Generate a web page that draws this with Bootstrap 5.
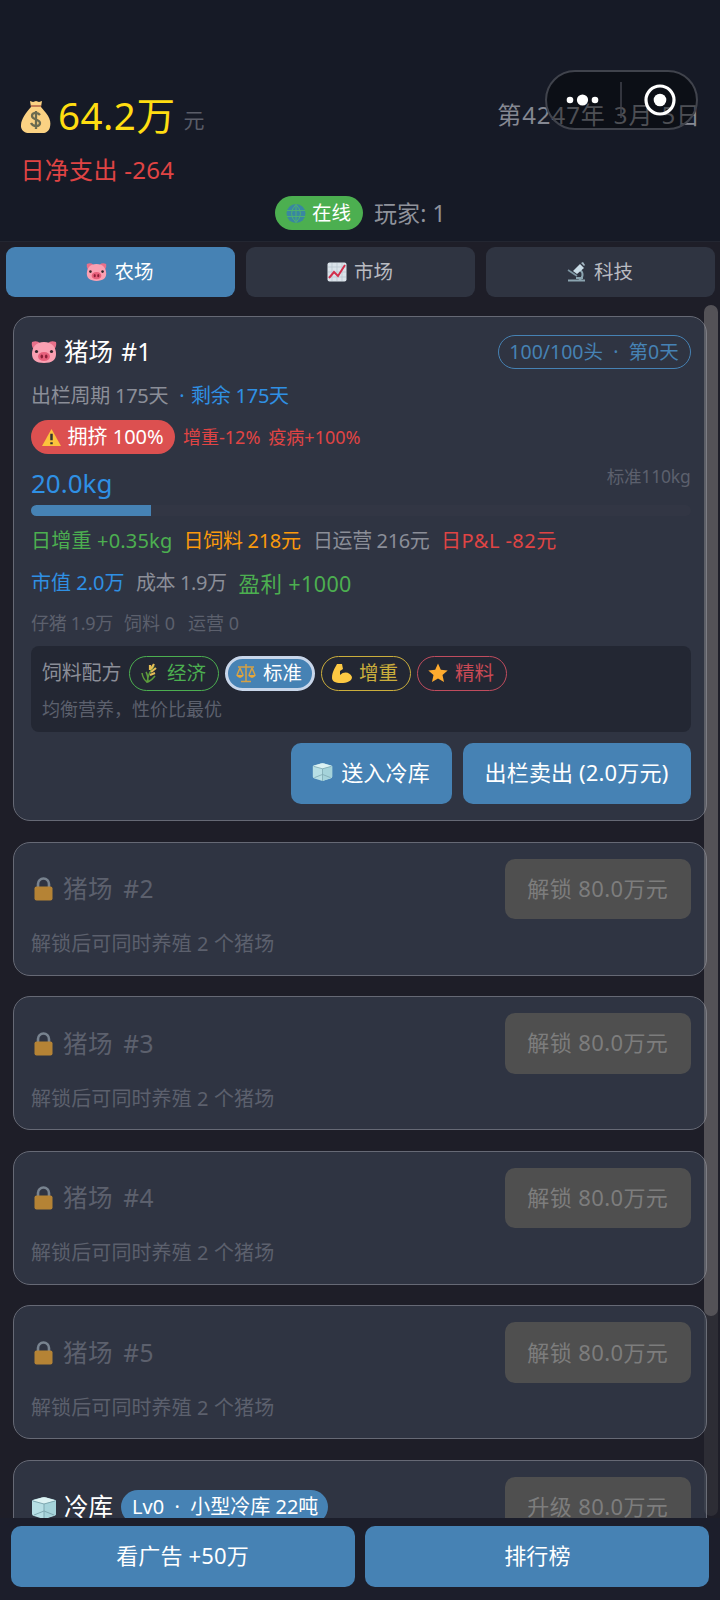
<!DOCTYPE html>
<html lang="zh-CN">
<head>
<meta charset="utf-8">
<meta name="viewport" content="width=device-width, initial-scale=1">
<title>猪场</title>
<link rel="stylesheet" href="https://cdn.jsdelivr.net/npm/bootstrap@5.3.0/dist/css/bootstrap.min.css">
<style>
body{background:#1e1e28;font-family:"Noto Sans","Noto Sans CJK SC",sans-serif;font-size:20px;line-height:1;color:#fff;font-weight:400;height:1600px;overflow:hidden;white-space:nowrap}
svg{flex:none;display:block}
.hud{height:242px;background:#161a26;border-bottom:1px solid #232631;position:relative}
.cash{height:46px;margin:94px 20px 0 21px}
.cash-num{font-size:38.5px;color:#fd1;margin-left:7px;padding-bottom:3px;letter-spacing:.5px}
.unit{font-size:21px;color:#5a5d68;margin:6px 0 0 8px}
.date{font-size:24px;color:#858892;word-spacing:1px;letter-spacing:.9px;margin-right:-1px;padding-bottom:4px}
.net{font-size:24px;color:#e04444;height:34px;margin:13px 0 0 20.5px;letter-spacing:.3px}
.online{height:34px;margin-top:9px;padding-left:275px}
.pill{border-radius:99px;height:34px;display:flex;align-items:center}
.pill-on{background:#4caf50;width:88px;padding-left:11px;gap:6px;font-size:19.5px}
.players{font-size:23px;color:#8f929b;margin-left:11px;letter-spacing:.1px}
.capsule{position:absolute;left:545px;top:70px;width:153px;height:60px;border-radius:30px;background:rgba(0,0,0,.42);border:2px solid #40434c}
.tabs{padding:5px 5.5px 0;gap:11px;height:62px}
.tab-b{height:50px;border-radius:9px;background:#2f3441;color:#b9bbc1;font-size:19.5px;gap:7px;flex:1 1 0}
.tab-b.on{background:#4682b4;color:#fff}
.list{height:1214px;overflow:hidden;position:relative;padding:11.5px 13px 0}
.farm{border:1px solid #666975;border-radius:17px;background:#2f3442;padding:16px 15.5px 15px 17px;margin-bottom:20.6px;height:134px}
.farm-open{height:505px;margin-bottom:21px}
.name{font-size:24.5px;gap:7px;word-spacing:2px;padding-top:1px}
.dim .name{letter-spacing:.6px;word-spacing:3px}
.headcount{border:1px solid #4682b4;color:#4682b4;height:34px;width:193px;justify-content:center;font-size:19.5px}
.grey{color:#8b8e98}.dim{color:#5c606d}.blue{color:#2f90e4}.green{color:#4caf50}.amber{color:#fb9a0c}.red{color:#e04444}
.crowd{background:#dc5050;width:144px;padding-left:10.5px;gap:7px;font-size:20px}
.tiny{font-size:18px}
.bar{height:11px;border-radius:6px;background:#323644}
.bar>div{height:100%;background:#4682b4}
.stat{display:grid;align-items:center}
.s1{grid-template-columns:152.5px 129.5px 128px auto;height:51px}
.s2{grid-template-columns:105px 102.5px auto;height:33.5px}
.s3{grid-template-columns:93px 64px auto;font-size:18px;height:45.5px}
.r-head{height:38px}.r-cycle{height:50px;letter-spacing:-.25px}.r-crowd{height:33px}.r-weight{height:51px}
.feed{background:#232733;border-radius:8px;height:86px;padding:10px 11px 0}
.opt{width:90px;border:1px solid #4caf50;padding-left:10px;gap:7px;height:35px;font-size:19.5px}
.opt-sel{border:3px solid #c8d6ea;background:#4682b4;color:#fff;padding-left:8px}
.opt-y{border-color:#cbae3c;color:#cbae3c}.opt-r{border-color:#c04c5e;color:#c94a56}
.act{background:#4682b4;border-radius:10px;height:60.5px;font-size:22px;color:#fff;display:flex;align-items:center;justify-content:center;gap:8px;padding-bottom:2px;letter-spacing:.15px}
.act-off{background:#4f4f4f;color:#7d7d7d;width:185.5px;letter-spacing:.4px}
.desc{margin-top:15px;letter-spacing:.1px}
.track{position:absolute;right:2.5px;top:1px;width:14px;height:1211px;border-radius:7px;background:rgba(150,150,150,.13)}
.thumb{height:1011px;border-radius:7px;background:rgba(160,155,155,.34)}
.foot{height:82px;background:#1c1e2b;padding:8px 10.5px 0;gap:10.8px;position:relative}
</style>
</head>
<body>
<svg width="0" height="0" class="position-absolute">
<symbol id="pig" viewBox="0 0 26 24"><path d="M1 2q5-2 8 1L3 10Q0 6 1 2zM25 2q-5-2-8 1l6 7q3-4 2-8z" fill="#e8708a"/><path d="M13 2C5 2 1 7 1 14c0 6 4 9 12 9s12-3 12-9C25 7 21 2 13 2z" fill="#fba0b2"/><ellipse cx="13" cy="16.500" rx="6" ry="4.500" fill="#e8607c"/><ellipse cx="10.800" cy="16.500" rx="1.300" ry="2" fill="#8c1f38"/><ellipse cx="15.200" cy="16.500" rx="1.300" ry="2" fill="#8c1f38"/><circle cx="5.500" cy="11.500" r="1.600" fill="#33262c"/><circle cx="20.500" cy="11.500" r="1.600" fill="#33262c"/></symbol>
<symbol id="ice" viewBox="0 0 26 24"><path d="M1 5q0-1 2-1.500l8-2q2-.5 4 0l8 2q2 .5 2 1.500v13q0 1.500-2 2l-8 2.500q-2 .5-4 0l-8-2.500q-2-.5-2-2z" fill="#b7dfe5"/><path d="M1.500 4.500l9.500-3q2-.5 4 0l9.500 3L13 8z" fill="#dcf2f3"/><path d="M13 8v15l11-4q1-.5 1-1.500V4.500z" fill="#a5d3da"/><path d="M2 5l11 3 11-3M13 8v15M3 19l10-4 10 4" fill="none" stroke="#7fa9b2"/></symbol>
<symbol id="lock" viewBox="0 0 20 24"><path d="M4.500 11V7a5.500 5.500 0 0 1 11 0v4" fill="none" stroke="#78838f" stroke-width="2.600"/><rect x="1" y="9.500" width="18" height="14" rx="2" fill="#b58335"/></symbol>
</svg>

<header class="hud overflow-hidden">
  <div class="cash d-flex align-items-center">
    <svg width="30" height="34" viewBox="0 0 30 34"><path d="M9 1l3 1 3-1 3 1 3-1-1 6 5 6c4 5 5 9 4 14-1 4-4 6-7 6H8c-4 0-7-2-8-6C-.500 20 4 14 10 7z" fill="#fbd283"/><path d="M10 6h10" stroke="#c47d55" stroke-width="2"/><path d="M19 15c-2-3-8-3-8 1s8 3 8 7-7 4-9 0M15 11v18" fill="none" stroke="#6b6b50" stroke-width="2.300"/></svg>
    <span class="cash-num">64.2万</span><span class="unit">元</span>
    <span class="date ms-auto">第4247年 3月 5日</span>
  </div>
  <div class="net d-flex align-items-center">日净支出 -264</div>
  <div class="online d-flex align-items-center">
    <div class="pill pill-on"><svg width="20" height="21" viewBox="0 0 20 20"><circle cx="10" cy="10" r="9.500" fill="#3987a0"/><path d="M1 7h18M1 13h18M10 1v18M10 1q-9 9 0 18M10 1q9 9 0 18" fill="none" stroke="#4caf70"/></svg>在线</div>
    <span class="players">玩家: 1</span>
  </div>
  <div class="capsule"><svg width="149" height="56" viewBox="0 0 149 56"><g fill="#fff"><circle cx="23" cy="28" r="3.300"/><circle cx="35.500" cy="28" r="5.600"/><circle cx="48" cy="28" r="3.300"/><circle cx="113" cy="28" r="6.300"/></g><circle cx="113" cy="28" r="14" fill="none" stroke="#fff" stroke-width="3.200"/><path d="M74 10v36" stroke="#40434c" stroke-width="1.500"/></svg></div>
</header>

<nav class="tabs d-flex">
  <div class="tab-b on d-flex align-items-center justify-content-center"><svg width="21" height="20"><use href="#pig"/></svg>农场</div>
  <div class="tab-b d-flex align-items-center justify-content-center"><svg width="20" height="20" viewBox="0 0 20 20"><rect x=".5" y=".5" width="19" height="19" rx="2" fill="#dbe3ea"/><path d="M5 1v18M10 1v18M15 1v18M1 5h18M1 10h18M1 15h18" stroke="#b9c4cf" stroke-width=".7"/><path d="M2 16l5-6 4 4 7-11" fill="none" stroke="#d22f4b" stroke-width="2"/></svg>市场</div>
  <div class="tab-b d-flex align-items-center justify-content-center"><svg width="20" height="20" viewBox="0 0 20 20"><path d="M1 18.500h17M9 16h7" stroke="#8ba4b0" stroke-width="2"/><path d="M13 8c4 3 3 8-1 10" fill="none" stroke="#8ba4b0" stroke-width="2"/><path d="M1 8l9 6" stroke="#7d95a2" stroke-width="1.600"/><path d="M6 9l7-7 4 4-7 6z" fill="#c9dce6"/><path d="M14 1l2-1 2 3-1 1z" fill="#a4b8c4"/></svg>科技</div>
</nav>

<main class="list">
  <section class="farm farm-open">
    <div class="r-head d-flex align-items-center justify-content-between">
      <div class="name d-flex align-items-center"><svg width="26" height="24"><use href="#pig"/></svg>猪场 #1</div>
      <div class="pill headcount">100/100头&nbsp; ·&nbsp; 第0天</div>
    </div>
    <div class="r-cycle d-flex align-items-center grey">出栏周期 175天<span class="blue" style="margin-left:11px">·&nbsp;&hairsp;剩余 175天</span></div>
    <div class="r-crowd tiny d-flex align-items-center red"><div class="pill crowd text-white me-2"><svg width="19" height="19" viewBox="0 0 20 20"><path d="M10 1l10 18H0z" fill="#fcc23c"/><path d="M10 6v7M10 15v2" stroke="#333" stroke-width="2.600"/></svg>拥挤 100%</div><span>增重-12%</span><span class="ms-2">疫病+100%</span></div>
    <div class="r-weight d-flex justify-content-between align-items-center"><span class="blue pt-2" style="font-size:26px">20.0kg</span><span class="dim pb-1" style="font-size:17.500px;letter-spacing:-.2px">标准110kg</span></div>
    <div class="bar overflow-hidden"><div style="width:18.2%"></div></div>
    <div class="stat s1"><span class="green" style="letter-spacing:.2px">日增重 +0.35kg</span><span class="amber" style="letter-spacing:-.3px">日饲料 218元</span><span class="grey" style="letter-spacing:-.4px">日运营 216元</span><span class="red" style="letter-spacing:.45px">日P&amp;L -82元</span></div>
    <div class="stat s2"><span class="blue">市值 2.0万</span><span class="grey" style="letter-spacing:-.4px">成本 1.9万</span><span class="green" style="font-size:21.500px;letter-spacing:.4px">盈利 +1000</span></div>
    <div class="stat s3 dim"><span style="letter-spacing:-.3px">仔猪 1.9万</span><span>饲料 0</span><span>运营 0</span></div>
    <div class="feed">
      <div class="d-flex align-items-center" style="gap:6px"><span class="grey" style="width:81px;letter-spacing:-.2px">饲料配方</span>
        <div class="pill opt green"><svg width="20" height="20" viewBox="0 0 20 20"><path d="M7 20Q8 10 14 3M7 19Q3 16 2 10M8 19q0-7-2-10M8 19q4-2 7-6" fill="none" stroke="#5c9c3c" stroke-width="1.500"/><path d="M14 1l-3 5M16 5l-5 4M15 10l-5 2M10 2v5" stroke="#e4bd55" stroke-width="2.200"/></svg>经济</div>
        <div class="pill opt opt-sel"><svg width="20" height="20" viewBox="0 0 20 20"><path d="M10 1v17M2 4h16M5 18.500h10M4 5l-3 7M4 5l3 7M16 5l-3 7M16 5l3 7" fill="none" stroke="#d5a145" stroke-width="1.500"/><path d="M0 12h8q-4 6-8 0zM12 12h8q-4 6-8 0z" fill="#e6a63a"/></svg>标准</div>
        <div class="pill opt opt-y"><svg width="20" height="20" viewBox="0 0 20 20"><path d="M5 1l5 0 1 5-3 2 0 4c4-4 10-3 12 2 0 4-5 6-11 6-6 0-9-2-9-5C0 9 3 5 5 1z" fill="#fdc943"/></svg>增重</div>
        <div class="pill opt opt-r"><svg width="20" height="20" viewBox="0 0 20 20"><path d="M10 .5l2.800 6.300 6.900.7-5.200 4.600 1.500 6.900-6-3.600-6 3.600 1.500-6.900L.3 7.500l6.900-.7z" fill="#ffab2e"/></svg>精料</div>
      </div>
      <div class="dim tiny" style="margin-top:9px">均衡营养，性价比最优</div>
    </div>
    <div class="d-flex justify-content-end" style="gap:11px;margin-top:11.500px"><div class="act" style="width:161px"><svg width="21" height="20"><use href="#ice"/></svg>送入冷库</div><div class="act" style="width:228px">出栏卖出 (2.0万元)</div></div>
  </section>

  <section class="farm dim"><div class="d-flex align-items-center"><div class="name d-flex align-items-center"><svg width="25" height="24"><use href="#lock"/></svg><span>猪场 #2</span></div><div class="act act-off ms-auto">解锁 80.0万元</div></div><div class="desc">解锁后可同时养殖 2 个猪场</div></section>
  <section class="farm dim"><div class="d-flex align-items-center"><div class="name d-flex align-items-center"><svg width="25" height="24"><use href="#lock"/></svg><span>猪场 #3</span></div><div class="act act-off ms-auto">解锁 80.0万元</div></div><div class="desc">解锁后可同时养殖 2 个猪场</div></section>
  <section class="farm dim"><div class="d-flex align-items-center"><div class="name d-flex align-items-center"><svg width="25" height="24"><use href="#lock"/></svg><span>猪场 #4</span></div><div class="act act-off ms-auto">解锁 80.0万元</div></div><div class="desc">解锁后可同时养殖 2 个猪场</div></section>
  <section class="farm dim"><div class="d-flex align-items-center"><div class="name d-flex align-items-center"><svg width="25" height="24"><use href="#lock"/></svg><span>猪场 #5</span></div><div class="act act-off ms-auto">解锁 80.0万元</div></div><div class="desc">解锁后可同时养殖 2 个猪场</div></section>
  <section class="farm"><div class="d-flex align-items-center"><div class="name d-flex align-items-center"><svg width="26" height="24"><use href="#ice"/></svg><span>冷库</span></div><div class="pill ms-2" style="background:#4682b4;width:207px;padding-left:11px">Lv0&nbsp; ·&nbsp; 小型冷库 22吨</div><div class="act act-off ms-auto">升级 80.0万元</div></div></section>
  <div class="track"><div class="thumb"></div></div>
</main>

<footer class="foot d-flex"><div class="act flex-fill w-50">看广告 +50万</div><div class="act flex-fill w-50">排行榜</div></footer>
<script src="https://cdn.jsdelivr.net/npm/bootstrap@5.3.0/dist/js/bootstrap.bundle.min.js"></script>
</body>
</html>
